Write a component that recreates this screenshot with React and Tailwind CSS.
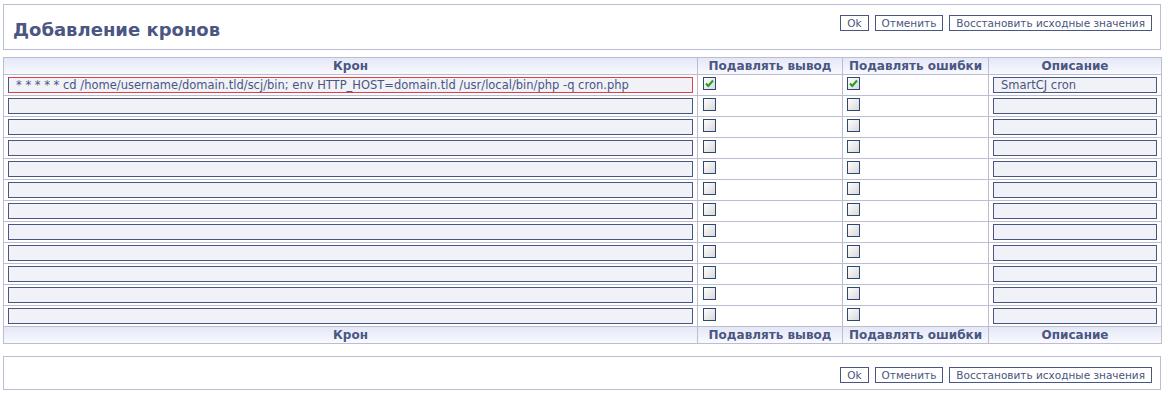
import { Fragment } from "react";

const FONT = { fontFamily: "Verdana, 'DejaVu Sans', sans-serif" };

function Btn({ children }) {
  return (
    <button className="h-[16px] px-[6px] border border-[#4a5580] bg-white text-[10.5px] leading-[14px] text-[#4a5580]">
      {children}
    </button>
  );
}

function Buttons() {
  return (
    <div className="flex gap-[6px]">
      <Btn>Ok</Btn>
      <Btn>Отменить</Btn>
      <Btn>Восстановить исходные значения</Btn>
    </div>
  );
}

function Check({ on }) {
  return (
    <span className="block w-[13px] h-[13px] border border-[#2c4a70] bg-gradient-to-br from-white to-[#d8d8d8] relative">
      {on && (
        <svg viewBox="0 0 11 11" className="absolute inset-0 w-[11px] h-[11px]">
          <path d="M2 5.5 L4.3 8 L9 2.5" fill="none" stroke="#2a9a2a" strokeWidth="2" />
        </svg>
      )}
    </span>
  );
}

function Field({ value, red }) {
  return (
    <div
      className={
        "h-[16px] border bg-[#f1f2f8] text-[11.5px] leading-[14px] text-[#4a5580] pl-[7px] whitespace-nowrap overflow-hidden " +
        (red ? "border-[#e04040] border-l-[#4a5580]" : "border-[#4a5580]")
      }
    >
      {value}
    </div>
  );
}

const heads = ["Крон", "Подавлять вывод", "Подавлять ошибки", "Описание"];

function HeadRow() {
  return (
    <tr className="h-[17px] bg-gradient-to-b from-[#e4e8f6] to-[#fafbff]">
      {heads.map((h) => (
        <th key={h} className="border border-[#bcbcd2] text-[12px] leading-[15px] font-bold text-[#4b5683] p-0">
          {h}
        </th>
      ))}
    </tr>
  );
}

const rows = Array.from({ length: 12 }, (_, i) =>
  i === 0
    ? {
        cron: "* * * * * cd /home/username/domain.tld/scj/bin; env HTTP_HOST=domain.tld /usr/local/bin/php -q cron.php",
        out: true,
        err: true,
        desc: "SmartCJ cron",
      }
    : { cron: "", out: false, err: false, desc: "" }
);

export default function App() {
  return (
    <div style={FONT} className="w-[1164px] h-[394px] bg-white pt-[4px] px-[3px]">
      <div className="h-[46px] border border-[#bcbcd2] flex justify-between items-start pl-[9px] pr-[8px]">
        <h1 className="text-[18px] font-bold text-[#4b5683] mt-[14px] leading-[22px]">Добавление кронов</h1>
        <div className="mt-[10px]">
          <Buttons />
        </div>
      </div>

      <table className="mt-[7px] w-[1158px] border-collapse table-fixed border border-[#bcbcd2]">
        <colgroup>
          <col className="w-[694px]" />
          <col className="w-[145px]" />
          <col className="w-[146px]" />
          <col className="w-[173px]" />
        </colgroup>
        <thead>
          <HeadRow />
        </thead>
        <tbody>
          {rows.map((r, i) => (
            <Fragment key={i}>
              <tr className="h-[21px]">
                <td className="border border-[#bcbcd2] px-[4px] align-middle">
                  <Field value={r.cron} red={i === 0} />
                </td>
                <td className="border border-[#bcbcd2] pl-[5px] align-top pt-[2px]">
                  <Check on={r.out} />
                </td>
                <td className="border border-[#bcbcd2] pl-[4px] align-top pt-[2px]">
                  <Check on={r.err} />
                </td>
                <td className="border border-[#bcbcd2] pl-[4px] pr-[4px] align-middle">
                  <Field value={r.desc} />
                </td>
              </tr>
            </Fragment>
          ))}
        </tbody>
        <tfoot>
          <HeadRow />
        </tfoot>
      </table>

      <div className="mt-[12px] h-[34px] border border-[#bcbcd2] flex justify-end items-start pr-[8px]">
        <div className="mt-[10px]">
          <Buttons />
        </div>
      </div>
    </div>
  );
}
